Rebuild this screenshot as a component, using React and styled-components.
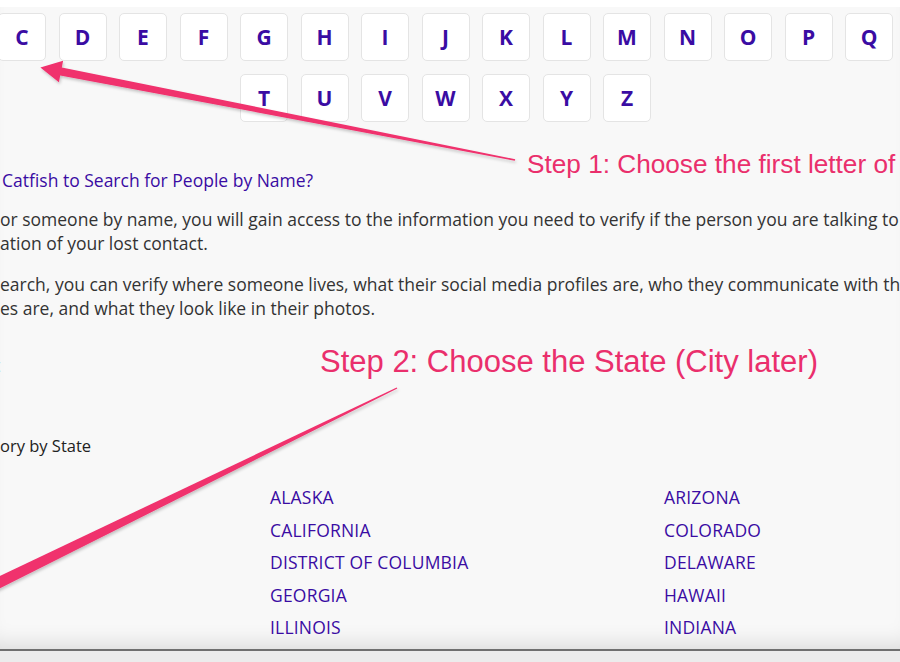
import React from 'react'
import styled, { createGlobalStyle } from 'styled-components'

const GlobalStyle = createGlobalStyle`
  html, body {
    margin: 0;
    padding: 0;
    background: #ececec;
    overflow: hidden;
  }
  body {
    font-family: 'Open Sans', 'Noto Sans', sans-serif;
  }
`

const Frame = styled.div`
  position: relative;
  width: 900px;
  height: 649px;
  overflow: hidden;
  background: #f8f8f8;
  border-bottom: 2px solid #6f6f6f;
  box-shadow: inset 0 -20px 22px -16px rgba(0, 0, 0, 0.13);
`

const TopStrip = styled.div`
  height: 7px;
  background: #ffffff;
`

const LetterGrid = styled.nav`
  display: grid;
  grid-template-columns: repeat(15, 48px);
  column-gap: 12.5px;
  row-gap: 13px;
  margin: 6px 0 0 -2px;
`

const LetterBox = styled.a`
  grid-column-start: ${p => p.$start || 'auto'};
  width: 48px;
  height: 48px;
  box-sizing: border-box;
  display: flex;
  align-items: center;
  justify-content: center;
  background: #ffffff;
  border: 1px solid #e4e4e4;
  border-radius: 5px;
  color: #3a0ca3;
  font-size: 21px;
  font-weight: 700;
  text-decoration: none;
`

const Content = styled.section`
  white-space: nowrap;
  color: #333333;
  font-size: 17.5px;
  line-height: 24px;
`

const Heading = styled.h2`
  margin: 46px 0 0 2px;
  font-size: 17.5px;
  font-weight: 400;
  line-height: 24px;
  color: #3a0ca3;
`

const Para = styled.p`
  margin: ${p => p.$top}px 0 0;
`

const Fragment = styled.div`
  margin: 33px 0 0 ${p => p.$shift}px;
`

const SubHeading = styled.h3`
  margin: 57px 0 0;
  font-size: 16.5px;
  font-weight: 400;
  line-height: 24px;
  color: #222;
`

const StateGrid = styled.ul`
  list-style: none;
  display: grid;
  grid-template-columns: 394px 394px;
  row-gap: 8.5px;
  margin: 27px 0 0;
  padding: 0 0 0 270px;
`

const StateLink = styled.li`
  color: #3a0ca3;
  font-size: 17.5px;
  letter-spacing: 0.2px;
  line-height: 24px;
  text-transform: uppercase;
`

const Overlay = styled.svg`
  position: absolute;
  left: 0;
  top: 0;
  pointer-events: none;
`

const StepLabel = styled.div`
  position: absolute;
  left: ${p => p.$x}px;
  top: ${p => p.$y}px;
  font-family: 'Liberation Sans', Arial, sans-serif;
  font-size: ${p => p.$size}px;
  color: #ea2f6c;
  white-space: nowrap;
  line-height: 1;
`

const firstRow = 'CDEFGHIJKLMNOPQ'.split('')
const secondRow = 'TUVWXYZ'.split('')

const states = [
  'Alaska', 'Arizona',
  'California', 'Colorado',
  'District of Columbia', 'Delaware',
  'Georgia', 'Hawaii',
  'Illinois', 'Indiana',
]

export default function App() {
  return (
    <>
      <GlobalStyle />
      <Frame>
        <TopStrip />
        <LetterGrid>
          {firstRow.map(l => <LetterBox key={l} href="#">{l}</LetterBox>)}
          {secondRow.map((l, i) => (
            <LetterBox key={l} href="#" $start={i === 0 ? 5 : undefined}>{l}</LetterBox>
          ))}
        </LetterGrid>

        <Content>
          <Heading>Catfish to Search for People by Name?</Heading>
          <Para $top={15}>
            or someone by name, you will gain access to the information you need to verify if the person you are talking to is who they say<br />
            ation of your lost contact.
          </Para>
          <Para $top={17}>
            earch, you can verify where someone lives, what their social media profiles are, who they communicate with the most<br />
            es are, and what they look like in their photos.
          </Para>
          <Fragment $shift={-6}>t</Fragment>
          <SubHeading>ory by State</SubHeading>
          <StateGrid>
            {states.map(s => <StateLink key={s}>{s}</StateLink>)}
          </StateGrid>
        </Content>

        <Overlay width="900" height="649" viewBox="0 0 900 649">
          <defs>
            <filter id="arrowShadow" x="-10%" y="-10%" width="120%" height="130%">
              <feDropShadow dx="1" dy="2" stdDeviation="1.5" floodColor="#000" floodOpacity="0.22" />
            </filter>
          </defs>
          <g fill="#f0306d" filter="url(#arrowShadow)">
            {/* step 1 arrow: triangular head at the C box, tapering shaft */}
            <polygon points="40.4,67.5 63.1,60.7 61.8,67.6 515.2,159.2 514.8,160.8 60.2,75.4 58.9,82.3" />
            {/* step 2 arrow: runs off the left edge */}
            <polygon points="397.3,388.6 396.7,387.4 -42.6,596.2 -37.4,607" />
          </g>
        </Overlay>

        <StepLabel $x={527} $y={151} $size={26.2}>Step 1: Choose the first letter of the</StepLabel>
        <StepLabel $x={320} $y={346} $size={31}>Step 2: Choose the State (City later)</StepLabel>
      </Frame>
    </>
  )
}
